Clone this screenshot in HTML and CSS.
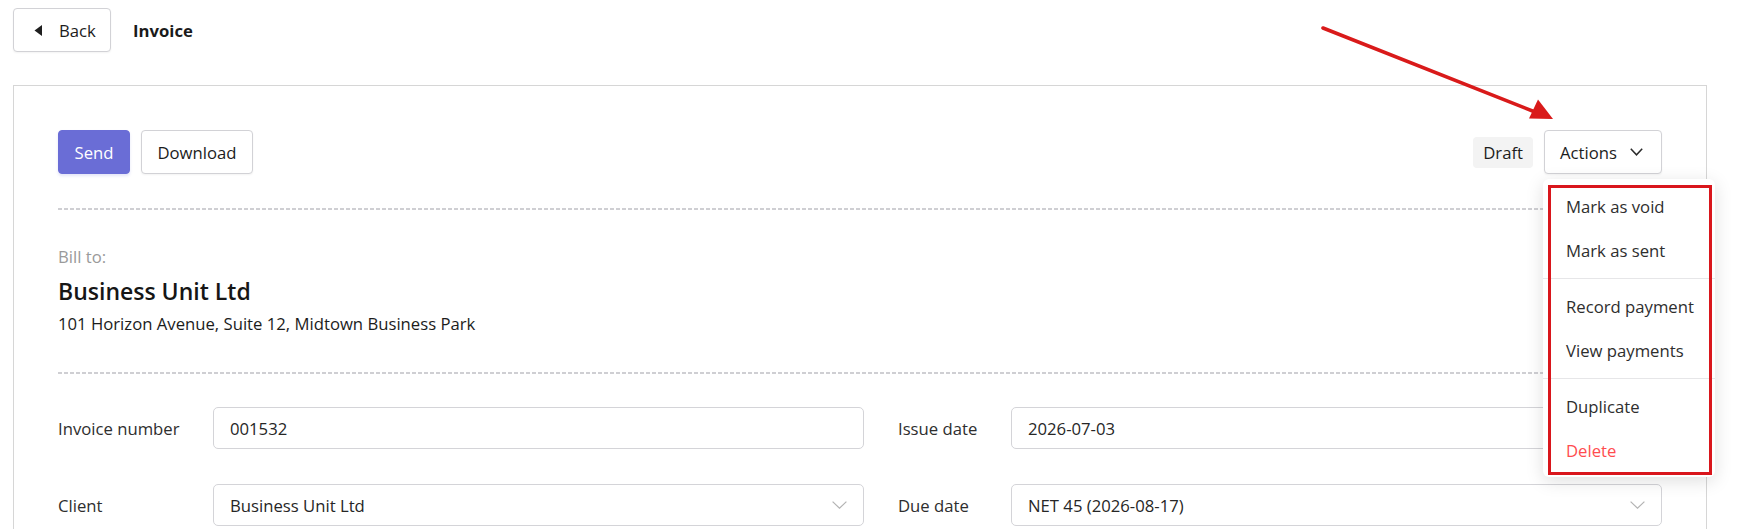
FILE: index.html
```html
<!DOCTYPE html>
<html lang="en">
<head>
<meta charset="utf-8">
<title>Invoice</title>
<link rel="stylesheet" href="styles.css">
</head>
<body>
<div class="page">
  <header class="topbar">
    <button class="btn back-btn" type="button">
      <svg class="back-icon" width="8" height="11" viewBox="0 0 8 11"><path d="M8 0 L0.5 5.5 L8 11 Z" fill="#1f1f1f"/></svg>
      <span>Back</span>
    </button>
    <h1 class="page-title">Invoice</h1>
  </header>

  <main class="card">
    <div class="toolbar">
      <div class="toolbar-left">
        <button class="btn btn-primary" type="button">Send</button>
        <button class="btn" type="button">Download</button>
      </div>
      <div class="toolbar-right">
        <span class="status-badge">Draft</span>
        <div class="actions">
          <button class="btn actions-btn" type="button">
            <span>Actions</span>
            <svg width="13" height="8" viewBox="0 0 13 8"><path d="M0.8 0.8 L6.5 6.8 L12.2 0.8" fill="none" stroke="#2b2b2b" stroke-width="1.5"/></svg>
          </button>
          <div class="menu">
            <div class="menu-item">Mark as void</div>
            <div class="menu-item">Mark as sent</div>
            <div class="menu-divider"></div>
            <div class="menu-item">Record payment</div>
            <div class="menu-item">View payments</div>
            <div class="menu-divider"></div>
            <div class="menu-item">Duplicate</div>
            <div class="menu-item menu-item-danger">Delete</div>
            <div class="highlight-box"></div>
          </div>
        </div>
      </div>
    </div>

    <div class="dashed"></div>

    <section class="bill-to">
      <div class="bill-label">Bill to:</div>
      <div class="bill-name">Business Unit Ltd</div>
      <div class="bill-address">101 Horizon Avenue, Suite 12, Midtown Business Park</div>
    </section>

    <div class="dashed"></div>

    <section class="form-grid">
      <label class="field-label">Invoice number</label>
      <div class="field">001532</div>
      <label class="field-label">Issue date</label>
      <div class="field">2026-07-03</div>

      <label class="field-label">Client</label>
      <div class="field field-select">
        <span>Business Unit Ltd</span>
        <svg width="15" height="8" viewBox="0 0 15 8"><path d="M0.6 0.6 L7.5 7.2 L14.4 0.6" fill="none" stroke="#b3b3b3" stroke-width="1.2"/></svg>
      </div>
      <label class="field-label">Due date</label>
      <div class="field field-select">
        <span>NET 45 (2026-08-17)</span>
        <svg width="15" height="8" viewBox="0 0 15 8"><path d="M0.6 0.6 L7.5 7.2 L14.4 0.6" fill="none" stroke="#b3b3b3" stroke-width="1.2"/></svg>
      </div>
    </section>
  </main>

  <svg class="pointer-arrow" width="1745" height="529" viewBox="0 0 1745 529">
    <line x1="1323" y1="28" x2="1535" y2="112" stroke="#d91a1a" stroke-width="3.6" stroke-linecap="round"/>
    <path d="M1553 119 L1529 118.5 L1538 99.5 Z" fill="#d91a1a"/>
  </svg>
</div>
</body>
</html>
```

FILE: styles.css
```css
* {
  box-sizing: border-box;
}

html, body {
  margin: 0;
  padding: 0;
  background: #ffffff;
}

body {
  font-family: "Open Sans", "Noto Sans", Arial, sans-serif;
  font-size: 16.7px;
  color: #1c1c1c;
  overflow: hidden;
}

.page {
  position: relative;
  padding: 8px 38px 0 13px;
}

/* top bar */
.topbar {
  display: flex;
  align-items: center;
  gap: 22px;
  height: 44px;
}

.btn {
  display: inline-flex;
  align-items: center;
  height: 44px;
  padding: 0 16px;
  font-family: inherit;
  font-size: 16.7px;
  color: #1c1c1c;
  background: #ffffff;
  border: 1px solid #d2d2d6;
  border-radius: 4px;
  box-shadow: 0 1px 2px rgba(0, 0, 0, 0.05);
  cursor: pointer;
}

.back-btn {
  width: 98px;
  padding: 0 0 0 20px;
  gap: 17px;
}

.back-icon {
  flex-shrink: 0;
}

.page-title {
  margin: 0;
  font-size: 16.7px;
  font-weight: 700;
  color: #1a1a1a;
}

/* card */
.card {
  margin-top: 33px;
  border: 1px solid #d6d6d6;
  padding: 44px;
}

.toolbar {
  display: flex;
  justify-content: space-between;
  align-items: center;
  height: 44px;
}

.toolbar-left {
  display: flex;
  gap: 11px;
}

.btn-primary {
  background: #6a6dd6;
  border-color: #6a6dd6;
  color: #ffffff;
  width: 72px;
  justify-content: center;
  padding: 0;
  box-shadow: 0 2px 3px rgba(106, 109, 214, 0.18);
}

.toolbar-left .btn:not(.btn-primary) {
  width: 112px;
  justify-content: center;
  padding: 0;
}

.toolbar-right {
  display: flex;
  align-items: center;
  gap: 11px;
}

.status-badge {
  display: inline-flex;
  align-items: center;
  height: 31px;
  padding: 0 10px;
  background: #f3f3f3;
  border-radius: 4px;
  color: #1c1c1c;
}

.actions {
  position: relative;
}

.actions-btn {
  width: 118px;
  padding-left: 15px;
  gap: 13px;
}

/* dropdown */
.menu {
  position: absolute;
  top: 49px;
  left: -1px;
  width: 172px;
  padding: 6px 0 4px;
  background: #ffffff;
  border-radius: 6px;
  box-shadow: 0 4px 18px rgba(0, 0, 0, 0.13);
  z-index: 5;
}

.menu-item {
  height: 44px;
  line-height: 44px;
  padding-left: 23px;
  color: #2e2e2e;
  white-space: nowrap;
}

.menu-item-danger {
  color: #ff4d4f;
}

.menu-divider {
  height: 1px;
  margin: 5px 0 6px;
  background: #e6e6e8;
}

.highlight-box {
  position: absolute;
  top: 6px;
  left: 5px;
  right: 3px;
  bottom: 2px;
  border: 3px solid #d9161c;
  pointer-events: none;
}

/* dashed separators */
.dashed {
  height: 2px;
  background-image: repeating-linear-gradient(to right, #cfcfd3 0 4px, transparent 4px 6px);
}

.toolbar + .dashed {
  margin-top: 34px;
}

/* bill to */
.bill-to {
  padding: 35px 0 36px;
}

.bill-label {
  line-height: 24px;
  color: #9a9a9a;
  margin-bottom: 6px;
}

.bill-name {
  font-size: 23px;
  font-weight: 600;
  line-height: 32px;
  color: #161616;
  margin-bottom: 5px;
}

.bill-address {
  line-height: 24px;
  color: #1c1c1c;
}

/* form */
.form-grid {
  display: grid;
  grid-template-columns: 121px 1fr 79px 1fr;
  column-gap: 34px;
  row-gap: 35px;
  align-items: center;
  padding-top: 33px;
}

.field-label {
  color: #2e2e2e;
  white-space: nowrap;
}

.field {
  display: flex;
  align-items: center;
  justify-content: space-between;
  height: 42px;
  padding: 0 16px;
  border: 1px solid #d4d4d8;
  border-radius: 5px;
  color: #262626;
}

.pointer-arrow {
  position: absolute;
  top: 0;
  left: 0;
  pointer-events: none;
  z-index: 10;
}
```
